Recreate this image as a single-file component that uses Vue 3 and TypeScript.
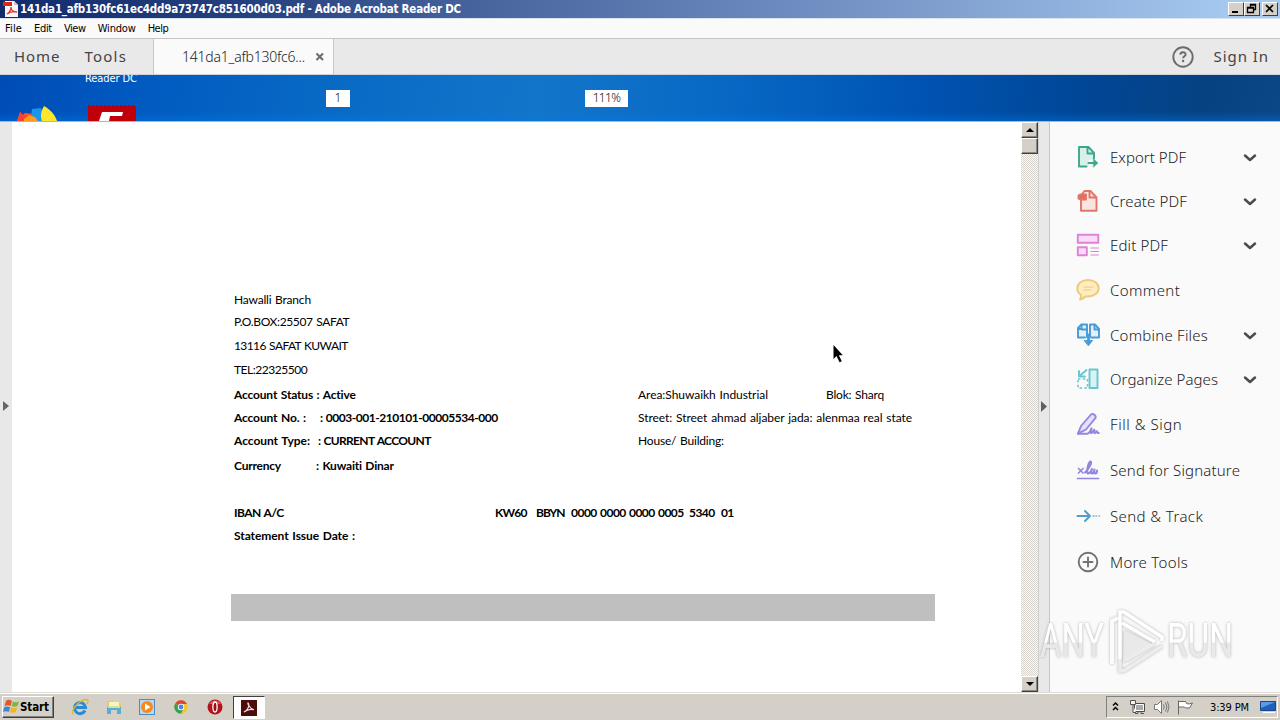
<script setup lang="ts">
import type { Directive } from 'vue'

interface Cell { text: string; width: number; cell?: number; bold?: boolean }
interface Line { gap: number; cells: Cell[] }
interface Tool { id: string; label: string; width: number; height: number; expandable?: boolean }

// Tracks a label in or out so that it spans the given number of pixels.
const vFit: Directive<HTMLElement, number> = {
  mounted(el, { value }) {
    const natural = el.getBoundingClientRect().width
    const count = (el.textContent ?? '').length
    if (count > 1) el.style.letterSpacing = `${(value - natural) / (count - 0.5)}px`
  },
}

const menus = [
  { label: 'File', width: 17 },
  { label: 'Edit', width: 18 },
  { label: 'View', width: 22 },
  { label: 'Window', width: 38 },
  { label: 'Help', width: 21 },
]

const lines: Line[] = [
  { gap: 0, cells: [{ text: 'Hawalli Branch', width: 77 }] },
  { gap: 2, cells: [{ text: 'P.O.BOX:25507 SAFAT', width: 115.5 }] },
  { gap: 4, cells: [{ text: '13116 SAFAT KUWAIT', width: 114 }] },
  { gap: 4, cells: [{ text: 'TEL:22325500', width: 73.5 }] },
  { gap: 5, cells: [
    { text: 'Account Status : Active', width: 122, cell: 404, bold: true },
    { text: 'Area:Shuwaikh Industrial', width: 130, cell: 188 },
    { text: 'Blok: Sharq', width: 58 },
  ] },
  { gap: 3, cells: [
    { text: 'Account No. :', width: 72, cell: 86, bold: true },
    { text: ': 0003-001-210101-00005534-000', width: 178, cell: 318, bold: true },
    { text: 'Street: Street ahmad aljaber jada: alenmaa real state', width: 274 },
  ] },
  { gap: 3, cells: [
    { text: 'Account Type:', width: 76, cell: 84, bold: true },
    { text: ': CURRENT ACCOUNT', width: 113, cell: 320, bold: true },
    { text: 'House/ Building:', width: 86 },
  ] },
  { gap: 5, cells: [
    { text: 'Currency', width: 47, cell: 82, bold: true },
    { text: ': Kuwaiti Dinar', width: 78, bold: true },
  ] },
  { gap: 27, cells: [
    { text: 'IBAN A/C', width: 50, cell: 261, bold: true },
    { text: 'KW60', width: 32, cell: 41, bold: true },
    { text: 'BBYN', width: 29, cell: 35, bold: true },
    { text: '0000 0000 0000 0005', width: 113, cell: 118, bold: true },
    { text: '5340', width: 26, cell: 32, bold: true },
    { text: '01', width: 13, bold: true },
  ] },
  { gap: 3, cells: [{ text: 'Statement Issue Date :', width: 121, bold: true }] },
]

const tools: Tool[] = [
  { id: 'export', label: 'Export PDF', width: 76, height: 44, expandable: true },
  { id: 'create', label: 'Create PDF', width: 77, height: 44, expandable: true },
  { id: 'edit', label: 'Edit PDF', width: 58, height: 44, expandable: true },
  { id: 'comment', label: 'Comment', width: 70, height: 46 },
  { id: 'combine', label: 'Combine Files', width: 98, height: 44, expandable: true },
  { id: 'organize', label: 'Organize Pages', width: 108, height: 44, expandable: true },
  { id: 'fill', label: 'Fill & Sign', width: 72, height: 46 },
  { id: 'signature', label: 'Send for Signature', width: 130, height: 46 },
  { id: 'track', label: 'Send & Track', width: 93, height: 46 },
  { id: 'more', label: 'More Tools', width: 78, height: 45 },
]
</script>

<template>
  <div class="screen">
    <header class="titlebar">
      <svg class="pdf-icon" width="16" height="16" viewBox="0 0 16 16">
        <path d="M2 0h9l4 4v12H2z" fill="#f6f4f4" />
        <path d="M11 0l4 4h-4z" fill="#c9c4cc" />
        <path d="M0 1h9v4H0z" fill="#d8281c" />
        <path d="M4 13c3-2 4-5 4-7 0 3 2 5 6 5-4-1-7 0-10 2z" fill="none" stroke="#dc3a2c" stroke-width="1.3" />
      </svg>
      <span v-fit="441" class="title">141da1_afb130fc61ec4dd9a73747c851600d03.pdf - Adobe Acrobat Reader DC</span>
      <div class="window-buttons">
        <span class="wbtn"><svg width="14" height="12" viewBox="0 0 14 12"><path d="M3 8h6v2H3z" /></svg></span>
        <span class="wbtn"><svg width="14" height="12" viewBox="0 0 14 12"><path d="M5.500 4V1.500h5v5H9M5 2h6M2.500 4.500h6v5h-6zM2 5h7" fill="none" stroke="#000" stroke-width="1.3" /></svg></span>
        <span class="wbtn last"><svg width="14" height="12" viewBox="0 0 14 12"><path d="M3 2l7 7M10 2l-7 7" stroke="#000" stroke-width="1.7" /></svg></span>
      </div>
    </header>

    <nav class="menubar">
      <span v-for="m in menus" :key="m.label" v-fit="m.width">{{ m.label }}</span>
    </nav>

    <div class="tabbar">
      <div class="home-tabs">
        <span v-fit="46">Home</span>
        <span v-fit="42">Tools</span>
      </div>
      <div class="doc-tab">
        <span v-fit="123">141da1_afb130fc6...</span>
        <svg width="10" height="10" viewBox="0 0 10 10"><path d="M1.500 1.500l6.500 6.500M8 1.500l-6.500 6.500" stroke="#6a6a6a" stroke-width="2" /></svg>
      </div>
      <div class="account">
        <svg width="22" height="22" viewBox="0 0 22 22">
          <circle cx="11" cy="11" r="9.700" fill="none" stroke="#6c6c6c" stroke-width="1.900" />
          <path d="M8.300 8.600c.2-3.300 5.500-3.100 5.300 0-.1 1.700-2.500 1.800-2.500 3.700" fill="none" stroke="#6c6c6c" stroke-width="1.900" />
          <circle cx="11.100" cy="15" r="1.200" fill="#6c6c6c" />
        </svg>
        <span v-fit="55">Sign In</span>
      </div>
    </div>

    <div class="desktop-strip">
      <span v-fit="52" class="desk-label">Reader DC</span>
      <svg class="desk-icons" width="140" height="46" viewBox="0 0 140 46">
        <path d="M17 46l3-9 3 3 2-2 8 1 4 7z" fill="#ff5a24" />
        <path d="M20 37l4 4 7-2-4 7h-9z" fill="#ff3d35" />
        <path d="M32 34l9-1 4 13H35l-4-5z" fill="#1c94e8" />
        <path d="M24 44l5-4 6 2 3 4H24z" fill="#ff9c1b" />
        <path d="M44 31c7 4 11 9 13 15H42c-2-5-1-10 2-15z" fill="#ffe62b" />
        <path d="M88 31h48v15H88z" fill="#bf0008" />
        <path d="M88 31h48" stroke="#8c0c36" stroke-width="1.500" stroke-dasharray="2 2" />
        <path d="M102 37h21l-1 4h-12l-1 5H99z" fill="#fff" />
      </svg>
      <span class="page-no">1</span>
      <span class="zoom"><span v-fit="28">111%</span></span>
    </div>

    <main class="workspace">
      <div class="left-rail"><svg width="6" height="10" viewBox="0 0 6 10"><path d="M0 0l6 5-6 5z" fill="#666" /></svg></div>
      <section class="page">
        <div class="statement">
          <div v-for="(line, i) in lines" :key="i" class="line" :style="{ marginTop: line.gap + 'px' }">
            <div
              v-for="(c, j) in line.cells"
              :key="j"
              :class="['cell', { bold: c.bold }]"
              :style="{ width: c.cell ? c.cell + 'px' : 'auto' }"
            ><span v-fit="c.width">{{ c.text }}</span></div>
          </div>
          <div class="grey-band"></div>
        </div>
      </section>
      <div class="scrollbar">
        <span class="sbtn"><svg width="8" height="4" viewBox="0 0 8 4"><path d="M4 0l4 4H0z" /></svg></span>
        <span class="sbtn thumb"></span>
        <span class="sbtn down"><svg width="8" height="4" viewBox="0 0 8 4"><path d="M4 4l4-4H0z" /></svg></span>
      </div>
      <div class="right-rail"><svg width="6" height="11" viewBox="0 0 6 11"><path d="M0 0l6 5.500-6 5.500z" fill="#606060" /></svg></div>
      <aside class="tools">
        <div v-for="t in tools" :key="t.id" class="tool" :style="{ height: t.height + 'px' }">
          <svg class="tool-icon" width="24" height="24" viewBox="0 0 24 24" fill="none" stroke-width="1.900" stroke-linejoin="round" stroke-linecap="round">
            <g v-if="t.id === 'export'" stroke="#3da78b">
              <path d="M12.500 21.500H3V2h9.500L18 8v6l-5 1z" fill="#d9efe9" stroke="none" />
              <path d="M10.500 21.500H3V2h9.500L18 8v5.500M11.500 2.500V8.500H18" />
              <path d="M12.500 18h7" stroke-width="2.200" /><path d="M17.500 14l4.500 4-4.500 4z" fill="#3da78b" stroke-width=".5" />
            </g>
            <g v-else-if="t.id === 'create'" stroke="#e0766b">
              <path d="M5 12v9.700h15.500V8.500l-6-6.500H8.500L6 5z" fill="#fbe3df" />
              <path d="M13.500 2v6.500h6.500" />
              <path d="M2.500 6.500L5 5.500h5v5H5l-2.500-1z" fill="#e46b5f" />
            </g>
            <g v-else-if="t.id === 'edit'" stroke="#de82d8" fill="#fadcf7">
              <rect x="1.800" y="1.800" width="20.500" height="8" /><rect x="1.800" y="14.300" width="9" height="8" />
              <path d="M15 15h7.500M15 18.500h7.500M15 22h7.500" stroke-width="1.200" />
            </g>
            <g v-else-if="t.id === 'comment'" stroke="#f0c977">
              <path d="M12 2c6 0 10.700 3.500 10.700 8.200S18 18.500 12 18.500l-3 0c-1 2-3 2.700-5 3 1-1.500 1.500-2.500 1-4.500-2.300-1.500-3.700-4-3.700-6.800C1.300 5.500 6 2 12 2z" fill="#fdedc4" />
              <path d="M8 9h9M8 12h7" stroke-width="1.200" />
            </g>
            <g v-else-if="t.id === 'combine'" stroke="#489bd5">
              <path d="M9 14.500H2V5l3.500-3.500H11V14M15 14.500h8V6l-4-4.500h-5V13" fill="#e3f0fa" />
              <path d="M5.500 2v4H2M18.500 2v4.500H23M6 6.500h4.500" />
              <path d="M12.500 12v7" stroke-width="2.800" /><path d="M8.500 17.500h8l-4 5z" fill="#489bd5" stroke-width="1" />
            </g>
            <g v-else-if="t.id === 'organize'" stroke="#66c7ce">
              <rect x="13.500" y="2.500" width="8" height="18.500" fill="#d9f3f5" />
              <path d="M2 12h9.500v9H2z" stroke-width="1.500" stroke-dasharray="2.500 2.300" stroke-linecap="butt" />
              <path d="M10.500 3L4 8.500M3 4v5.500h6" />
            </g>
            <g v-else-if="t.id === 'fill'" stroke="#9187df">
              <path d="M2 21.700L5 14 15 2.500c2-1.500 5.500.8 4.500 3.500L10 17.500z" fill="#e5e1fb" />
              <path d="M2 21.700h9c3 0 4-5.500 4.500-5.500s-1.500 5 0 5 2-3.500 2.700-3.500-.7 3.500.6 3.500 1.400-2 2-2 0 2.300 2 1.800" />
            </g>
            <g v-else-if="t.id === 'signature'" stroke="#9187df">
              <path d="M1.500 20.500h21" stroke-width="1.700" />
              <path d="M2.500 10.500l4.500 4.500M7 10.500l-4.500 4.500" stroke-width="1.700" />
              <path d="M9 14.500C13 11 16.500 4 14.500 3.500S9.800 15.500 12 15.500s4-4.500 4-4.500-1.700 4.500 0 4.500 2.500-4 2.500-4-1 4 .7 4 1.800-2 1.800-3" stroke-width="2.100" />
            </g>
            <g v-else-if="t.id === 'track'" stroke="#509fc9">
              <path d="M1.500 12h12M9 7l5 5-5 5" stroke-width="2" /><path d="M17 12h1M20 12h.5M23 12h.5" stroke-width="1.500" stroke="#79aed0" />
            </g>
            <g v-else stroke="#737373"><circle cx="12" cy="12" r="9.300" /><path d="M12 7.500v9M7.500 12h9" /></g>
          </svg>
          <span v-fit="t.width" class="tool-label">{{ t.label }}</span>
          <svg v-if="t.expandable" class="chevron" width="14" height="10" viewBox="0 0 14 10"><path d="M2 2.500l5 4.500 5-4.500" fill="none" stroke="#4c4c4c" stroke-width="2.500" stroke-linecap="round" stroke-linejoin="round" /></svg>
        </div>
      </aside>
    </main>

    <footer class="taskbar">
      <div class="start">
        <svg width="17" height="16" viewBox="0 0 17 16">
          <path d="M3 2c2-2 4-1 6 0L7.500 7c-2-1-4-1-6 0z" fill="#e8562b" />
          <path d="M10 2.500c2 1 4 1 6-.3L14.500 7c-2 1-4 1-6 0z" fill="#7cb83c" />
          <path d="M1.200 8.200c2-1 4-1 6 0L5.700 13c-2-1-4-1-5.700 0z" fill="#3f86d4" />
          <path d="M8.200 8.300c2 1 4 1 6 0L12.700 13c-2 1-4 1-6 0z" fill="#f2b526" />
        </svg>
        <span v-fit="29">Start</span>
      </div>
      <div class="launchers">
        <svg width="18" height="18" viewBox="0 0 18 18">
          <path d="M14 12.500A5.500 5.500 0 1 1 14.500 9.500H5" fill="none" stroke="#278bd8" stroke-width="3" />
          <path d="M2 16C-1 12 9 2 15 1.500c3 0 2 3 1 4.500" fill="none" stroke="#e4b62f" stroke-width="1.300" />
        </svg>
        <svg width="18" height="18" viewBox="0 0 18 18">
          <path d="M2 3h6l1 2h7v7H2z" fill="#e9c95c" /><path d="M4 4h10v5H4z" fill="#fff3b5" />
          <path d="M2 16V9h14v7h-4v-4H6v4z" fill="#5aabd8" /><path d="M3 8h12v2H3z" fill="#cfe3a8" />
        </svg>
        <svg width="18" height="18" viewBox="0 0 18 18">
          <rect x="1.500" y="1.500" width="15" height="15" fill="#b9d8f0" stroke="#4c8bc5" />
          <circle cx="9" cy="9" r="6" fill="#f58a1f" /><path d="M7 5.500l5.500 3.500L7 12.500z" fill="#fff" />
        </svg>
        <svg width="18" height="18" viewBox="0 0 18 18">
          <circle cx="9" cy="9" r="6.700" fill="#f5c632" />
          <path d="M9 9L3.200 5.600A6.700 6.700 0 0 1 15 6H9z" fill="#df4434" />
          <path d="M9 9L3.200 5.600A6.700 6.700 0 0 0 9 15.700L11.600 10.500z" fill="#35a15a" />
          <circle cx="9" cy="9" r="3.200" fill="#fff" /><circle cx="9" cy="9" r="2.400" fill="#4a88e0" />
        </svg>
        <svg width="18" height="18" viewBox="0 0 18 18">
          <circle cx="9" cy="9" r="7.500" fill="#b3141b" /><path d="M3 6a7 7 0 0 1 12 0z" fill="#d9575b" />
          <ellipse cx="9" cy="9" rx="2.100" ry="5" fill="#971017" stroke="#fff" stroke-width="1.300" />
        </svg>
      </div>
      <div class="active-task">
        <svg width="16" height="16" viewBox="0 0 16 16">
          <rect width="16" height="16" fill="#4c0c0a" />
          <path d="M3 12c3-1 6-6 4.500-8.500S7 8 13 9.800C9 8.500 6 9.500 3 12z" fill="none" stroke="#eedddd" stroke-width="1.200" />
        </svg>
      </div>
      <div class="tray">
        <svg width="8" height="12" viewBox="0 0 8 12"><path d="M1 4.500l2.500-2.500L6 4.500M1 9l2.500-2.500L6 9" fill="none" stroke="#000" stroke-width="1.500" /></svg>
        <svg class="net" width="17" height="16" viewBox="0 0 17 16">
          <path d="M5.500 4.500h10v8h-10z" fill="#aaa" stroke="#4c4c4c" /><path d="M6.500 5.500h8v6h-8z" fill="none" stroke="#fff" />
          <path d="M9 13v1.500H6M12 13v1.500h3" stroke="#555" fill="none" /><path d="M1.500 1.500h5v4h-5zM4 6v7.500h3" fill="#f6f6f6" stroke="#555" />
        </svg>
        <svg class="vol" width="17" height="16" viewBox="0 0 17 16">
          <path d="M1.500 5.500h3l4-4v13l-4-4h-3z" fill="#fff" stroke="#777" />
          <path d="M10.500 5.500q1.500 2.500 0 5M12.500 3.500q3 4.500 0 9M14.500 2.500q3 5.500 0 11" fill="none" stroke="#777" />
        </svg>
        <svg class="flag" width="18" height="16" viewBox="0 0 18 16">
          <path d="M2.500 1.500v14M2.500 2.500h7l1 2c2 1 4 0 6-.5l-3 5h-4l-1-1H2.500z" fill="#fff" stroke="#666" />
        </svg>
        <span v-fit="39" class="clock">3:39 PM</span>
        <svg class="show-desktop" width="16" height="14" viewBox="0 0 16 14">
          <path d="M.5 1.500h15v9H.5z" fill="#1f60bd" stroke="#1b468c" /><path d="M1 2h14L1 8z" fill="#5b9be4" /><path d="M3 12.500h12" stroke="#fff" />
        </svg>
      </div>
    </footer>

    <svg class="cursor" width="12" height="18" viewBox="0 0 12 18"><path d="M.5 0v14l3-3 3 6.200 2.300-1-3-6h4z" fill="#000" /></svg>

    <svg class="watermark" width="230" height="80" viewBox="0 0 230 80">
      <defs>
        <linearGradient id="wm" x1="0" y1="0" x2="0" y2="1">
          <stop offset=".52" stop-color="#fff" /><stop offset=".55" stop-color="#e9e9e9" />
        </linearGradient>
      </defs>
      <g class="wm-shade">
        <text x="6" y="54" textLength="64" lengthAdjust="spacingAndGlyphs" fill="url(#wm)">ANY</text>
        <text x="133" y="54" textLength="66" lengthAdjust="spacingAndGlyphs" fill="url(#wm)">RUN</text>
        <path d="M90 27l30 15-31 18z" fill="#e9e9e9" />
        <path d="M78 61V18l6-3" fill="none" stroke="#fbfbfb" stroke-width="4" />
        <path d="M86 56v12l5-1 37-24M92 57l28-16" fill="none" stroke="#ececec" stroke-width="3.500" />
        <path d="M86 56V9h4l38 25v4M88 20l33 19" fill="none" stroke="#fff" stroke-width="3.500" />
      </g>
    </svg>
  </div>
</template>

<style>
body { margin: 0; overflow: hidden; }
</style>

<style scoped>
.screen { position: relative; width: 1280px; height: 720px; overflow: hidden; display: flex; flex-direction: column; background: #fff; font-family: "DejaVu Sans Condensed", "DejaVu Sans", sans-serif; }
.screen span { white-space: pre; }
.screen svg { display: block; flex: none; }

.titlebar { height: 18px; box-sizing: border-box; flex: none; display: flex; align-items: center; padding-left: 3px; background: linear-gradient(90deg, #122b6d 0%, #26417f 20%, #48659e 38%, #7795c7 68%, #a6caf0 97%); }
.title { margin-left: 1px; color: #fff; font: bold 11.500px/18px "DejaVu Sans Condensed", "DejaVu Sans", sans-serif; }
.window-buttons { margin-left: auto; margin-right: 2px; display: flex; }
.wbtn { width: 16px; height: 14px; box-sizing: border-box; background: #d4d0c8; border: 1px solid; border-color: #fff #404040 #404040 #fff; }
.wbtn.last { margin-left: 2px; }

.menubar { height: 19px; flex: none; display: flex; align-items: center; gap: 12px; padding-left: 5px; border-top: 1px solid #d9e4ef; background: #fbfafa; font-size: 11px; line-height: 18px; color: #000; }

.tabbar { height: 37px; box-sizing: border-box; flex: none; display: flex; border-top: 1px solid #c5c5c5; border-bottom: 1px solid #cfd2d6; background: #e9e9e9; color: #444; font: 15px/35px "Noto Sans", sans-serif; }
.home-tabs { width: 153px; box-sizing: border-box; display: flex; gap: 24px; padding-left: 14px; }
.doc-tab { width: 181px; box-sizing: border-box; display: flex; align-items: center; padding-left: 28px; border: solid #c8c8c8; border-width: 0 1px; background: #fafafa; color: #222; font-size: 14px; font-weight: 300; }
.doc-tab svg { margin-left: 10px; }
.account { margin-left: auto; display: flex; align-items: center; gap: 20px; padding-right: 11px; }

.desktop-strip { height: 46px; flex: none; position: relative; overflow: hidden; background: linear-gradient(180deg, transparent 80%, rgba(0, 125, 235, .35)), linear-gradient(97deg, #004cb7 0%, #0059c0 10%, #0869c5 25%, #1375c9 42%, #0869c5 56%, #0054b4 71%, #004797 84%, #064282 94%, #0b4787 100%); }
.desk-label { position: absolute; left: 85px; top: -4px; color: #fff; font-size: 11px; line-height: 15px; }
.desk-icons { position: absolute; left: 0; top: 0; }
.page-no, .zoom { position: absolute; top: 15px; height: 17px; background: #fff; color: #111; font: 300 12px/16px "Noto Sans", sans-serif; display: flex; justify-content: center; }
.page-no { left: 326px; width: 24px; }
.zoom { left: 585px; width: 43px; }

.workspace { height: 571px; flex: none; display: flex; box-sizing: border-box; border-top: 1px solid #9cbbdc; }
.left-rail { width: 12px; box-sizing: border-box; padding: 0 0 2px 3px; background: #e8e8e8; display: flex; align-items: center; }
.page { width: 1009px; background: #fff; }
.statement { padding: 168px 0 0 222px; }
.line { height: 20px; display: flex; color: #000; font: 12px/20px Lato, sans-serif; word-spacing: .8px; }
.cell { flex: none; }
.cell.bold { font-weight: 700; }
.grey-band { width: 704px; height: 27px; margin: 48px 0 0 -3px; background: #bfbfbf; }

.scrollbar { width: 17px; display: flex; flex-direction: column; background: repeating-conic-gradient(#d8d4cd 0 25%, #fbfaf8 0 50%) 0 0 / 2px 2px; border-right: 1px solid #d0d2d2; box-sizing: content-box; }
.sbtn { height: 16px; box-sizing: border-box; display: flex; align-items: center; justify-content: center; background: #d4d0c8; border: 1px solid; border-color: #fff #404040 #404040 #fff; box-shadow: inset -1px -1px #8c8982; flex: none; }
.sbtn.down { margin-top: auto; }
.right-rail { width: 11px; box-sizing: border-box; padding: 0 0 2px 2px; background: #e8e8e8; border-right: 1px solid #c6c6c6; display: flex; align-items: center; }

.tools { width: 230px; box-sizing: border-box; padding-top: 13px; background: #fafafa; }
.tool { display: flex; align-items: center; padding-left: 26px; box-sizing: border-box; }
.tool-icon { margin-right: 10px; }
.tool-label { color: #222; font: 300 15px/22px "Noto Sans", sans-serif; }
.chevron { margin-left: auto; margin-right: 23px; margin-top: 1px; }

.taskbar { height: 28px; flex: none; box-sizing: border-box; display: flex; border-top: 1px solid #dedbd5; box-shadow: inset 0 1px #fff; background: #d4d0c8; padding: 3px 2px 1px; }
.start { width: 52px; height: 22px; box-sizing: border-box; display: flex; align-items: center; padding-left: 0; border: 1px solid; border-color: #fff #404040 #404040 #fff; box-shadow: inset -1px -1px #808080; font: bold 11.500px/18px "DejaVu Sans Condensed", "DejaVu Sans", sans-serif; }
.launchers { display: flex; gap: 15.700px; padding: 2px 0 0 17px; }
.active-task { margin-left: 9px; width: 32px; height: 23px; box-sizing: border-box; display: flex; align-items: center; justify-content: center; background: #fff; border: 1px solid; border-color: #404040 #fff #fff #404040; }
.tray { margin-left: auto; width: 172px; height: 22px; box-sizing: border-box; display: flex; align-items: center; padding-left: 5px; border: 1px solid; border-color: #808080 #fff #fff #808080; font-size: 11px; }
.net { margin-left: 9px; }
.vol { margin-left: 7px; }
.flag { margin-left: 6px; }
.clock { margin-left: 16px; }
.show-desktop { margin-left: 11px; }

.cursor { position: absolute; left: 833px; top: 345px; }
.watermark { position: absolute; left: 1034px; top: 603px; }
.watermark text { font: 400 49px Roboto, sans-serif; }
.wm-shade { filter: drop-shadow(0 0 1.500px rgba(120, 120, 120, .55)); }
</style>
